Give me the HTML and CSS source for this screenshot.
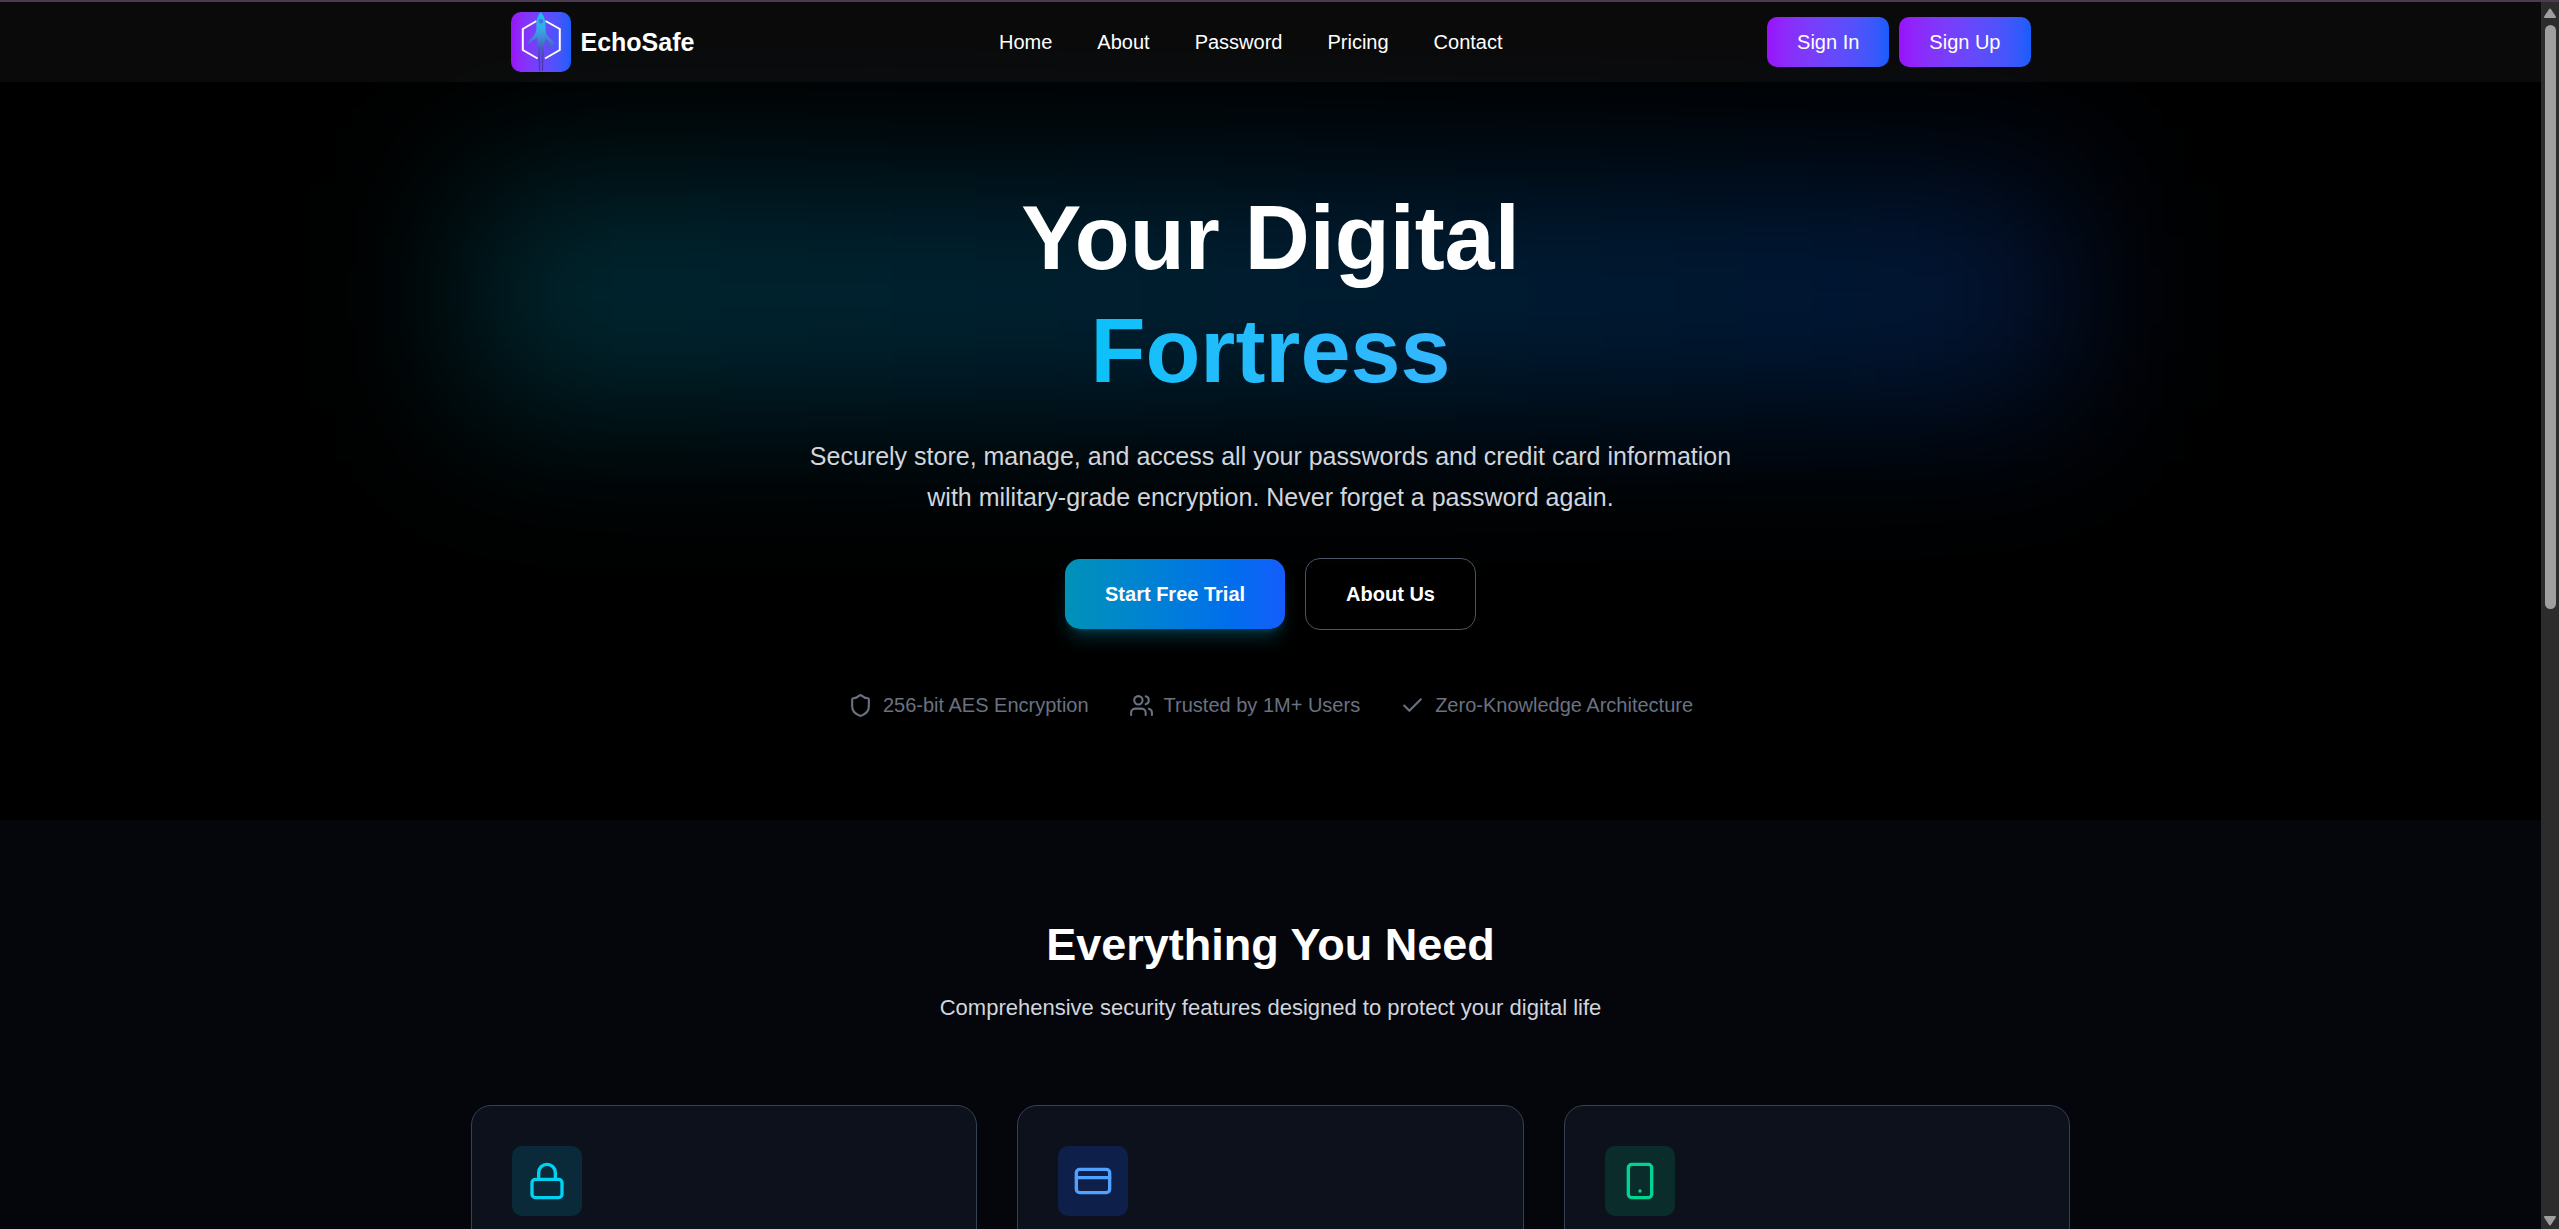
FILE: index.html
```html
<!DOCTYPE html>
<html lang="en">
<head>
<meta charset="utf-8">
<meta name="viewport" content="width=device-width, initial-scale=1">
<title>EchoSafe</title>
<link rel="stylesheet" href="styles.css">
</head>
<body>
<div class="shell">
  <div class="page">
    <header class="navbar">
      <div class="navbar-inner">
        <a class="brand" href="#">
          <svg class="brand-mark" viewBox="0 0 60 60" aria-hidden="true">
            <defs>
              <linearGradient id="rocket" gradientUnits="userSpaceOnUse" x1="0" y1="0" x2="0" y2="60">
                <stop offset="0" stop-color="#20c0f0"/>
                <stop offset=".3" stop-color="#36a8e4"/>
                <stop offset=".5" stop-color="#4478cc"/>
                <stop offset=".68" stop-color="#4b48a8"/>
                <stop offset="1" stop-color="#4a2ea6"/>
              </linearGradient>
            </defs>
            <path d="M25.500 9 11.800 17v21l14.800 8.500M34.500 9 48.800 17v21l-14.800 8.500" fill="none" stroke="#fff" stroke-width="2"/>
            <path fill="url(#rocket)" d="M29.700 0c2.300 2.500 4.300 6 4.700 10.500.3 3.500.1 7 .6 10 1 5 6.500 6.500 8.700 11.500l-7.200 4.500-.8-1.800 3.500-3-4.200-5.200-2.200 7.500-.8 25h-1L30.600 37h-1.400l-.2 22h-1L27 34l-.8-8.500-10.500 7.500c2-6 7.600-7.500 9.300-13.500.8-3 .3-6 .4-9.500C25.700 6 27.500 2.500 29.700 0z"/>
            <circle cx="30" cy="9.300" r="2.200" fill="#3f78e0"/>
          </svg>
          <span class="brand-name">EchoSafe</span>
        </a>
        <nav class="nav-links">
          <a href="#">Home</a>
          <a href="#">About</a>
          <a href="#">Password</a>
          <a href="#">Pricing</a>
          <a href="#">Contact</a>
        </nav>
        <div class="nav-actions">
          <button class="btn-auth" type="button">Sign In</button>
          <button class="btn-auth" type="button">Sign Up</button>
        </div>
      </div>
    </header>

    <main>
      <section class="hero">
        <div class="container">
          <div class="headline">
            <h1 class="hero-title">Your Digital <span class="hero-accent">Fortress</span></h1>
          </div>
          <p class="hero-text">Securely store, manage, and access all your passwords and credit card information with military-grade encryption. Never forget a password again.</p>
          <div class="cta-row">
            <button class="btn btn-primary" type="button">Start Free Trial</button>
            <button class="btn btn-outline" type="button">About Us</button>
          </div>
          <ul class="trust-row">
            <li>
              <svg class="icon icon-small" viewBox="0 0 24 24" aria-hidden="true"><path d="M20 13c0 5-3.500 7.500-7.660 8.950a1 1 0 0 1-.67-.01C7.500 20.500 4 18 4 13V6a1 1 0 0 1 1-1c2 0 4.500-1.200 6.240-2.720a1.170 1.170 0 0 1 1.520 0C14.510 3.810 17 5 19 5a1 1 0 0 1 1 1z"/></svg>
              256-bit AES Encryption
            </li>
            <li>
              <svg class="icon icon-small" viewBox="0 0 24 24" aria-hidden="true"><path d="M16 21v-2a4 4 0 0 0-4-4H6a4 4 0 0 0-4 4v2"/><circle cx="9" cy="7" r="4"/><path d="M22 21v-2a4 4 0 0 0-3-3.870"/><path d="M16 3.130a4 4 0 0 1 0 7.750"/></svg>
              Trusted by 1M+ Users
            </li>
            <li>
              <svg class="icon icon-small" viewBox="0 0 24 24" aria-hidden="true"><path d="M20 6 9 17l-5-5"/></svg>
              Zero-Knowledge Architecture
            </li>
          </ul>
        </div>
      </section>

      <section class="features">
        <div class="container">
          <h2 class="features-title">Everything You Need</h2>
          <p class="features-text">Comprehensive security features designed to protect your digital life</p>
          <div class="card-grid">
            <article class="card">
              <div class="tile tile-cyan">
                <svg class="icon icon-large" viewBox="0 0 24 24" aria-hidden="true"><rect x="3" y="11" width="18" height="11" rx="2"/><path d="M7 11V7a5 5 0 0 1 10 0v4"/></svg>
              </div>
            </article>
            <article class="card">
              <div class="tile tile-blue">
                <svg class="icon icon-large" viewBox="0 0 24 24" aria-hidden="true"><rect x="2" y="5" width="20" height="14" rx="2"/><path d="M2 10h20"/></svg>
              </div>
            </article>
            <article class="card">
              <div class="tile tile-green">
                <svg class="icon icon-large" viewBox="0 0 24 24" aria-hidden="true"><rect x="5" y="2" width="14" height="20" rx="2"/><path d="M12 18h.01"/></svg>
              </div>
            </article>
          </div>
        </div>
      </section>
    </main>
  </div>

  <div class="scrollbar" aria-hidden="true">
    <svg class="scroll-arrow" viewBox="0 0 14 10"><path d="M7 1.500 12 9H2z"/></svg>
    <div class="scroll-track"><div class="scroll-thumb"></div></div>
    <svg class="scroll-arrow" viewBox="0 0 14 10"><path d="M7 8.500 12 1H2z"/></svg>
  </div>
</div>
</body>
</html>
```
FILE: styles.css
```css
*,
*::before {
  box-sizing: border-box;
}

body {
  margin: 0;
  background: #000;
  color: #fff;
  font-family: "Liberation Sans", Arial, sans-serif;
  font-size: 20px;
  line-height: 30px;
}

h1, h2, p, ul {
  margin: 0;
  padding: 0;
}

button {
  font: inherit;
  color: inherit;
  border: 0;
  cursor: pointer;
}

a {
  color: inherit;
  text-decoration: none;
}

.shell {
  display: flex;
  height: 100vh;
  overflow: hidden;
  border-top: 2px solid #4a3b4f;
}

.page {
  flex: 1;
  min-width: 0;
  overflow: hidden;
}

.container {
  max-width: 1600px;
  margin: 0 auto;
}

/* Navigation */

.navbar {
  position: relative;
  z-index: 2;
  background: rgba(255, 255, 255, 0.04);
}

.navbar-inner {
  display: flex;
  align-items: center;
  justify-content: space-between;
  max-width: 1600px;
  height: 80px;
  margin: 0 auto;
  padding: 0 40px;
}

.brand {
  display: flex;
  align-items: center;
  gap: 10px;
}

.brand-mark {
  width: 60px;
  height: 60px;
  border-radius: 10px;
  background: linear-gradient(to right in oklab, #9810fa, #155dfc);
}

.brand-name {
  font-size: 25px;
  font-weight: 700;
}

.nav-links {
  display: flex;
  gap: 45px;
  padding-left: 40px;
}

.nav-actions {
  display: flex;
  gap: 10px;
}

.btn-auth {
  padding: 10px 30px;
  border-radius: 10px;
  background: linear-gradient(to right in oklab, #9810fa, #155dfc);
}

/* Hero */

.hero {
  position: relative;
  padding: 100px 0;
  text-align: center;
}

.headline {
  position: relative;
}

.headline::before {
  content: "";
  position: absolute;
  inset: 0;
  background: linear-gradient(to right in oklab, oklch(71.5% 0.143 215.221 / 0.23), oklch(54.6% 0.245 262.881 / 0.23));
  filter: blur(80px);
}

.hero-title {
  position: relative;
  font-size: 90px;
  line-height: 113px;
  font-weight: 700;
}

.hero-accent {
  display: block;
  background: linear-gradient(to right in oklab, oklch(78.9% 0.154 211.53), oklch(70.7% 0.165 254.624));
  background-clip: text;
  -webkit-background-clip: text;
  color: transparent;
}

.hero-text {
  position: relative;
  max-width: 960px;
  margin: 28px auto 40px;
  color: #d1d5dc;
  font-size: 25px;
  line-height: 41px;
}

.cta-row {
  position: relative;
  display: flex;
  align-items: center;
  justify-content: center;
  gap: 20px;
}

.btn {
  padding: 20px 40px;
  border-radius: 15px;
  font-weight: 700;
}

.btn-primary {
  background: linear-gradient(to right in oklab, #0092b8, #155dfc);
  box-shadow: 0 12px 18px -4px rgba(0, 184, 219, 0.25), 0 5px 8px -5px rgba(0, 184, 219, 0.25);
}

.btn-outline {
  border: 1px solid #4a5565;
  background: transparent;
}

.trust-row {
  display: flex;
  justify-content: center;
  gap: 40px;
  margin-top: 60px;
  color: #6a7282;
  list-style: none;
}

.trust-row li {
  display: flex;
  align-items: center;
  gap: 10px;
}

.icon {
  fill: none;
  stroke: currentColor;
  stroke-width: 2;
  stroke-linecap: round;
  stroke-linejoin: round;
}

.icon-small {
  width: 25px;
  height: 25px;
}

.icon-large {
  width: 40px;
  height: 40px;
}

/* Features */

.features {
  padding: 100px 0;
  background: #05060b;
  text-align: center;
}

.features-title {
  font-size: 45px;
  line-height: 50px;
  font-weight: 700;
}

.features-text {
  margin: 20px 0 80px;
  color: #d1d5dc;
  font-size: 22px;
  line-height: 35px;
}

.card-grid {
  display: grid;
  grid-template-columns: repeat(3, 1fr);
  gap: 40px;
}

.card {
  min-height: 320px;
  padding: 40px;
  border: 1px solid #364153;
  border-radius: 20px;
  background: #0d111c;
}

.tile {
  display: flex;
  align-items: center;
  justify-content: center;
  width: 70px;
  height: 70px;
  border-radius: 10px;
}

.tile-cyan {
  background: #0a2a3a;
  color: #00d3f2;
}

.tile-blue {
  background: #0e1f4a;
  color: #51a2ff;
}

.tile-green {
  background: #0a2d2c;
  color: #00d492;
}

/* Scrollbar */

.scrollbar {
  display: flex;
  flex-direction: column;
  align-items: center;
  width: 18px;
  padding: 6px 0 3px;
  background: #2c2c2c;
}

.scroll-arrow {
  width: 14px;
  height: 10px;
  fill: #9f9f9f;
  stroke: #9f9f9f;
  stroke-width: 2;
  stroke-linejoin: round;
}

.scroll-track {
  flex: 1;
  padding-top: 7px;
}

.scroll-thumb {
  width: 11px;
  height: 49%;
  border-radius: 6px;
  background: #9f9f9f;
}
```
